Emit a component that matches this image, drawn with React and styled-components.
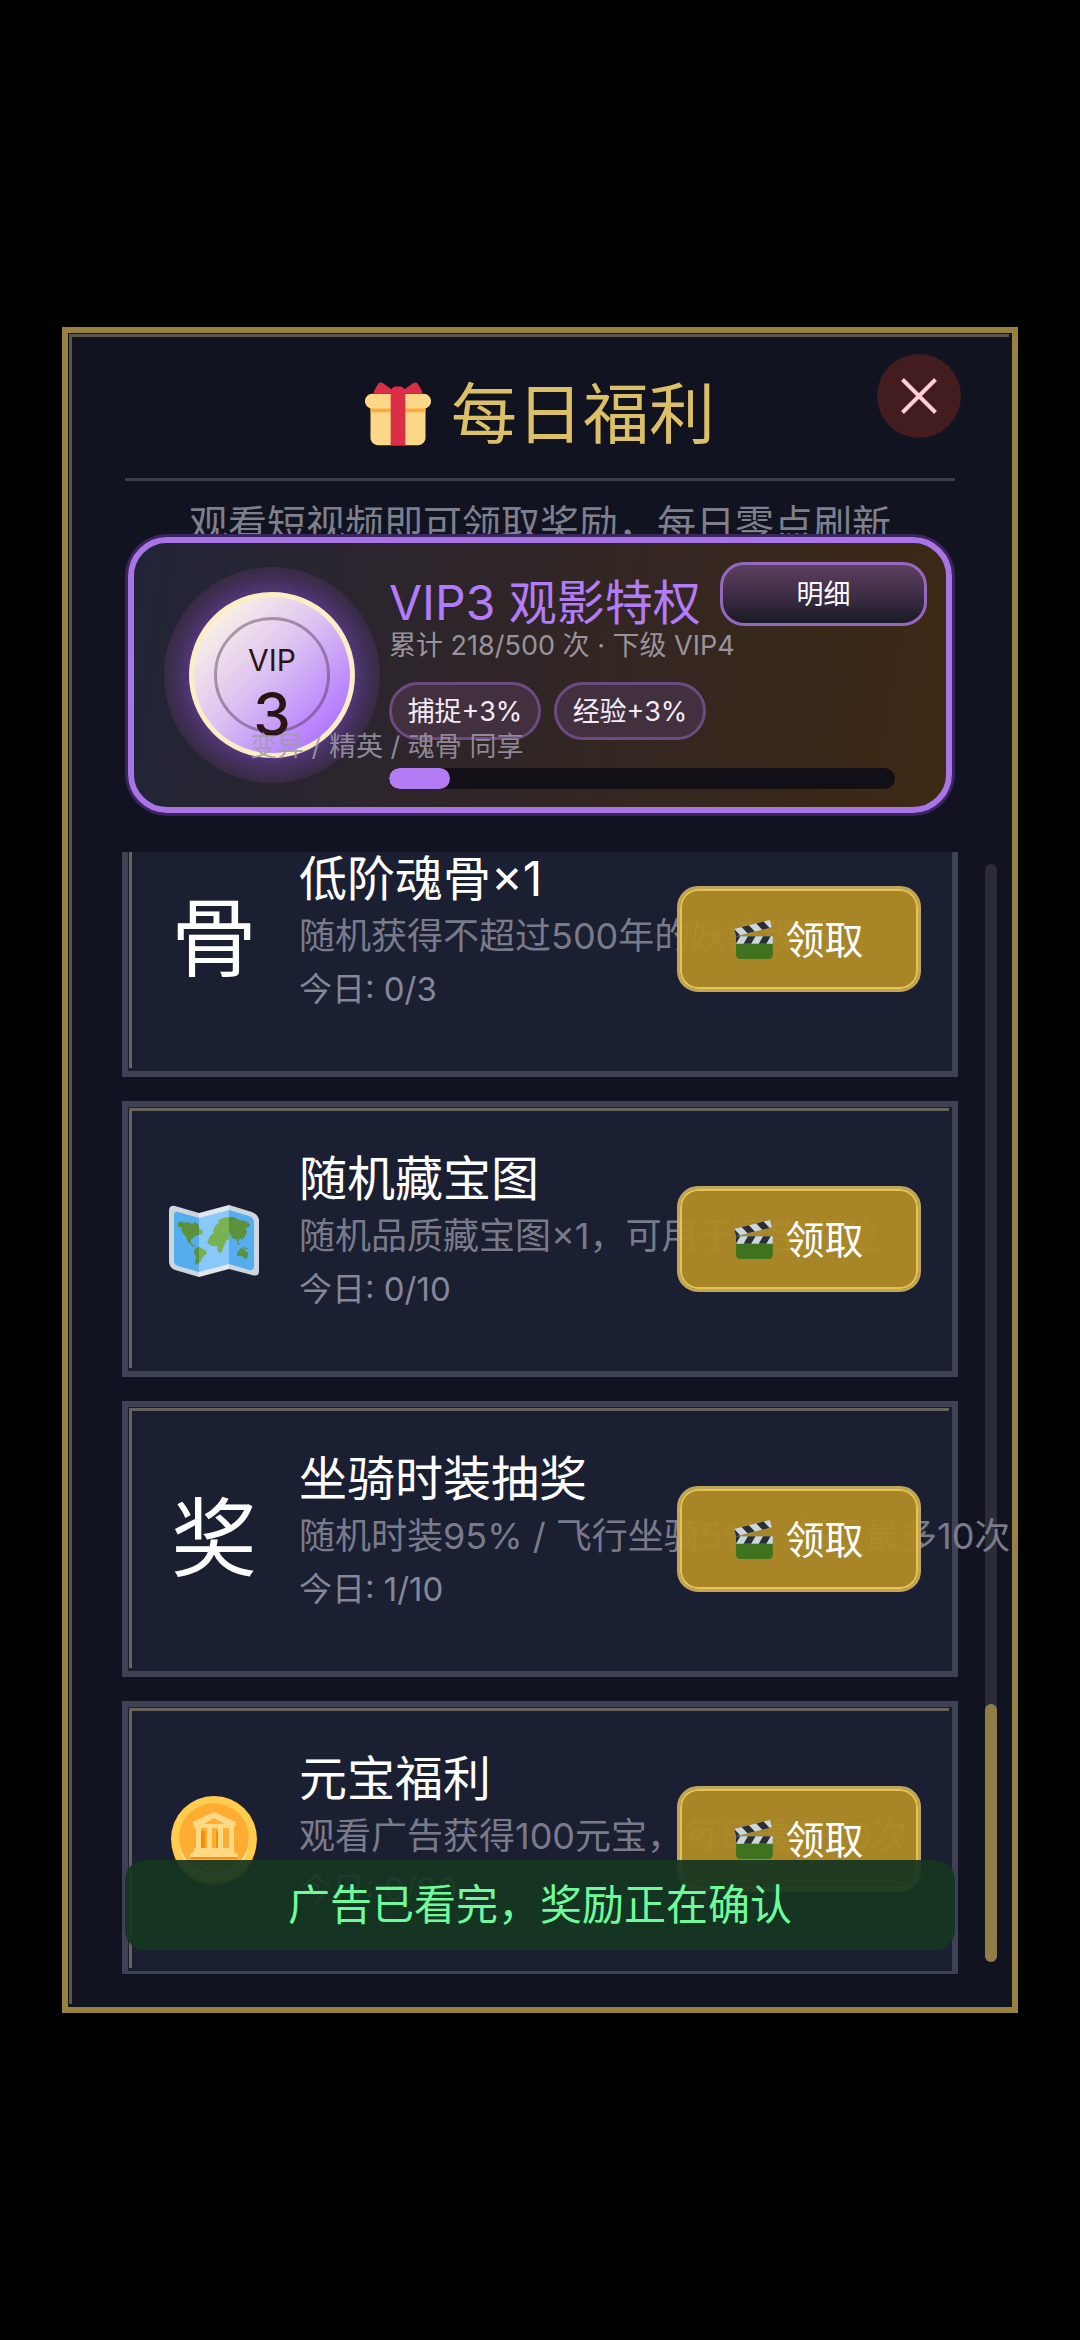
import React from "react";
import styled, { createGlobalStyle } from "styled-components";

const GlobalStyle = createGlobalStyle`
  * {
    box-sizing: border-box;
  }

  body {
    margin: 0;
    background: #000;
    font-family: Inter, "Noto Sans CJK SC", sans-serif;
    color: #fff;
  }

  button {
    font-family: inherit;
    cursor: pointer;
  }

  h1, h2, h3, p, ul {
    margin: 0;
    padding: 0;
    font-weight: 400;
  }
`;

const Screen = styled.main`
  display: flex;
  flex-direction: column;
  height: 100vh;
  padding: 327px 62px;
`;

const Panel = styled.section`
  position: relative;
  flex: 1;
  min-height: 0;
  display: flex;
  flex-direction: column;
  padding: 0 54px 33px;
  border: 6px solid #98803f;
  background: #111320;

  &::before {
    content: "";
    position: absolute;
    inset: 1px 3px 3px 1px;
    border-top: 3px solid #5b554c;
    border-left: 3px solid #5b554c;
    pointer-events: none;
  }
`;

const Header = styled.header`
  display: flex;
  align-items: center;
  justify-content: center;
  gap: 20px;
  height: 148px;
  margin: 0 3px;
  padding-top: 16px;
  border-bottom: 3px solid #3d3d49;
`;

const Title = styled.h1`
  font-size: 66px;
  line-height: 80px;
  color: #dcc068;
`;

const CloseButton = styled.button`
  position: absolute;
  top: 21px;
  right: 51px;
  display: flex;
  align-items: center;
  justify-content: center;
  width: 84px;
  height: 84px;
  padding: 0;
  border: none;
  border-radius: 50%;
  background: #431c20;
`;

const Subtitle = styled.p`
  margin-top: 16px;
  font-size: 39px;
  line-height: 54px;
  text-align: center;
  white-space: nowrap;
  color: #7e808d;
`;

const VipCard = styled.section`
  position: relative;
  display: flex;
  gap: 9px;
  height: 276px;
  margin: -14px 6px 0;
  padding-left: 30px;
  border: 6px solid #a874e6;
  border-radius: 39px;
  background: linear-gradient(100deg, #212438 0%, #2e2529 40%, #3e2914 100%);
  background-clip: padding-box;
  box-shadow: 0 0 0 3px #3c2460;
`;

const BadgeGlow = styled.div`
  align-self: center;
  display: flex;
  align-items: center;
  justify-content: center;
  flex-shrink: 0;
  width: 216px;
  height: 216px;
  border-radius: 50%;
  background: radial-gradient(circle closest-side, #56377f 74%, #42305a 88%, #382b44 100%);
`;

const Badge = styled.div`
  position: relative;
  display: flex;
  flex-direction: column;
  align-items: center;
  width: 166px;
  height: 166px;
  padding-top: 45px;
  border: 5px solid #fbeec4;
  border-radius: 50%;
  background: linear-gradient(135deg, #fbf6e6 10%, #dcc0f2 48%, #b47cff 84%);
  color: #2b1512;

  &::before {
    content: "";
    position: absolute;
    inset: 20px;
    border: 3px solid rgba(60, 30, 50, 0.38);
    border-radius: 50%;
  }
`;

const BadgeLabel = styled.span`
  font-size: 30px;
  line-height: 36px;
`;

const BadgeLevel = styled.span`
  font-size: 60px;
  font-weight: 500;
  line-height: 72px;
`;

const VipInfo = styled.div`
  flex: 1;
  min-width: 0;
  padding: 19px 51px 0 0;
`;

const VipHead = styled.div`
  display: flex;
  justify-content: space-between;
  height: 68px;
  margin-right: -32px;
`;

const VipTitle = styled.h2`
  padding-top: 14px;
  font-size: 48px;
  line-height: 54px;
  white-space: nowrap;
  color: #b27cf8;
`;

const DetailButton = styled.button`
  width: 207px;
  height: 64px;
  padding: 0 0 4px;
  border: 3px solid #9468bd;
  border-radius: 24px;
  background: linear-gradient(#5e3f60, #3c2c44 55%, #191a25);
  font-size: 27px;
  color: #fff;
`;

const VipText = styled.p`
  font-size: 27px;
  line-height: 32px;
  white-space: nowrap;
  color: #98949c;
`;

const VipScope = styled(VipText)`
  position: absolute;
  top: 188px;
  left: 116px;
  color: rgba(160, 155, 172, 0.85);
`;

const Perks = styled.div`
  display: flex;
  gap: 13px;
  margin-top: 20px;
`;

const Perk = styled.span`
  display: flex;
  align-items: center;
  justify-content: center;
  width: 152px;
  height: 58px;
  padding-bottom: 4px;
  border: 3px solid #6b4b80;
  border-radius: 29px;
  background: #43303f;
  font-size: 27px;
  white-space: nowrap;
  color: #f3ecf6;
`;

const Progress = styled.div`
  height: 21px;
  margin-top: 28px;
  border-radius: 11px;
  background: #121016;
  overflow: hidden;
`;

const ProgressFill = styled.div`
  height: 100%;
  border-radius: 11px;
  background: #b27af3;
`;

const Body = styled.div`
  flex: 1;
  min-height: 0;
  display: flex;
  gap: 27px;
  margin: 39px -39px 0 0;
`;

const ListViewport = styled.div`
  position: relative;
  z-index: 1;
  flex: 1;
  min-width: 0;
  overflow-x: visible;
  overflow-y: clip;
`;

const List = styled.ul`
  display: flex;
  flex-direction: column;
  gap: 24px;
  margin-top: -51px;
  list-style: none;
`;

const RewardCard = styled.li`
  position: relative;
  display: flex;
  align-items: center;
  height: 276px;
  padding: 0 31px 0 43px;
  border: 6px solid #3f4255;
  background: #1b1f32;

  &::before {
    content: "";
    position: absolute;
    inset: 1px 3px 3px 1px;
    border-top: 3px solid #67635a;
    border-left: 3px solid #67635a;
    pointer-events: none;
  }
`;

const RewardIcon = styled.div`
  display: flex;
  align-items: center;
  justify-content: center;
  flex-shrink: 0;
  width: 86px;
  height: 108px;
  margin-right: 42px;
  font-size: 86px;
  line-height: 108px;

  svg {
    flex-shrink: 0;
    margin-top: 4px;
  }
`;

const RewardText = styled.div`
  flex: 1;
  min-width: 0;
  height: 180px;
  white-space: nowrap;
`;

const RewardName = styled.h3`
  font-size: 48px;
  line-height: 60px;
`;

const RewardDesc = styled.p`
  font-size: 36px;
  line-height: 54px;
  color: #797b8a;
`;

const RewardCount = styled.p`
  font-size: 33px;
  line-height: 52px;
  color: #868799;
`;

const ClaimButton = styled.button`
  position: relative;
  display: flex;
  align-items: center;
  justify-content: center;
  gap: 12px;
  flex-shrink: 0;
  width: 244px;
  height: 106px;
  padding: 0 0 4px;
  border: 3px solid #c0a65a;
  border-radius: 21px;
  background: rgba(174, 138, 38, 0.96);
  background-clip: padding-box;
  box-shadow: inset 0 0 0 2px #e8c44e;
  font-size: 39px;
  color: #fff;

  svg {
    margin-top: 4px;
  }
`;

const ScrollTrack = styled.div`
  display: flex;
  flex-direction: column;
  justify-content: flex-end;
  width: 12px;
  margin: 12px 0;
  border-radius: 6px;
  background: #2b2c38;
`;

const ScrollThumb = styled.div`
  border-radius: 6px;
  background: #8f7c46;
`;

const Toast = styled.div`
  position: absolute;
  z-index: 2;
  right: 57px;
  bottom: 57px;
  left: 57px;
  padding: 15px 0;
  border-radius: 20px;
  background: rgba(20, 54, 33, 0.93);
  font-size: 42px;
  line-height: 60px;
  text-align: center;
  color: #6ffb9c;
`;

const GiftIcon = () => (
  <svg width="66" height="66" viewBox="0 0 36 36">
    <path fill="#FDD888" d="M33 31c0 2.2-1.8 4-4 4H7c-2.2 0-4-1.8-4-4V14c0-2.2 1.8-4 4-4h22c2.2 0 4 1.8 4 4v17z" />
    <path fill="#FDD888" d="M36 11c0 2.2-1.8 4-4 4H4c-2.2 0-4-1.8-4-4s1.8-4 4-4h28c2.2 0 4 1.8 4 4z" />
    <path fill="#FCAB40" d="M3 15h30v2H3z" />
    <path fill="#DA2F47" d="M19 3h-2c-1.657 0-3 1.343-3 3v29h8V6c0-1.657-1.343-3-3-3z" />
    <path fill="#DA2F47" d="M16 7c1.1 0 1.263-.516.361-1.147L9.639 1.147c-.902-.631-2.085-.366-2.631.589L4.992 5.264C4.446 6.219 4.9 7 6 7h10zm4 0c-1.1 0-1.263-.516-.361-1.147l6.723-4.706c.901-.631 2.085-.366 2.631.589l2.016 3.527C31.554 6.219 31.1 7 30 7H20z" />
  </svg>
);

const CloseIcon = () => (
  <svg width="36" height="36" viewBox="0 0 36 36" stroke="#ffcdd2" strokeWidth="4">
    <path d="M1.500 1.500 34.500 34.500M34.500 1.500 1.500 34.500" />
  </svg>
);

const ClapperIcon = () => (
  <svg width="39" height="39" viewBox="0 0 36 36">
    <path fill="#3E721D" d="M35.845 32c0 2.200-1.800 4-4 4h-26c-2.200 0-4-1.800-4-4V19c0-2.200 1.800-4 4-4h26c2.200 0 4 1.800 4 4v13z" />
    <path fill="#CCD6DD" d="M1.845 15h34v7h-34z" />
    <path fill="#292F33" d="M1.845 15h4l-4 7v-7zm11 0l-4 7h7l4-7h-7zm14 0l-4 7h7l4-7h-7z" />
    <path fill="#CCD6DD" d="M.155 8.207L33.148 0l1.690 6.792L1.845 15z" />
    <path fill="#292F33" d="M.155 8.207l5.572 5.827L1.845 15 .155 8.207zm19.158 2.448l-5.572-5.828-6.793 1.690 5.572 5.828 6.793-1.690zm13.586-3.380l-5.572-5.828-6.793 1.690 5.572 5.827 6.793-1.689z" />
  </svg>
);

const MapIcon = () => (
  <svg width="90" height="74" viewBox="0 0 90 74">
    <path fill="#ccd6dd" d="M0 7Q0 1 6 2L30 9V73L6 66Q0 63 0 58z" />
    <path fill="#e1e8ed" d="M30 9 60 1V65L30 73z" />
    <path fill="#ccd6dd" d="M60 1 83 8Q90 11 90 17V67Q90 73 83 71L60 65z" />
    <path fill="#55acee" d="M5 11Q5 7 9 8L30 14V68L9 62Q5 61 5 57z" />
    <path fill="#88c9f9" d="M30 14 60 6V60L30 68z" />
    <path fill="#55acee" d="M60 6 80 12Q85 14 85 18V62Q85 67 80 66L60 60z" />
    <path fill="#5c913b" d="M9 19 12 17 16 19 19 18 23 20 26 18 30 21V31L26 32 22 36 22 39 26 42 25 43 19 38 17 33 13 28 12 23 9 23z" />
    <path fill="#77b255" d="M30 24 34 27 33 30 30 31zM30 43 36 46 38 49 34 53 32 57 30 59z" />
    <path fill="#5c913b" d="M30 43V59L28 61 26 59 27 52 25 49 26 44z" />
    <path fill="#77b255" d="M38 39 41 32 45 29 44 27 46 22 51 18 48 17 54 14 60 13V35L57 37 55 42 52 49 49 48 48 42 43 42z" />
    <path fill="#5c913b" d="M60 13 65 13 70 16 76 17 81 20 80 23 77 24 78 29 76 32 73 36 71 34 69 38 67 35 64 35 60 27zM68 49 72 44 75 45 79 49 79 53 76 55 73 52 68 52zM68 37 71 40 69 41zM73 42 80 45 76 45z" />
  </svg>
);

const CoinIcon = () => (
  <svg width="86" height="90" viewBox="0 0 86 90">
    <circle cx="43" cy="47" r="42" fill="#f4900c" />
    <circle cx="43" cy="43" r="43" fill="#ffcc4d" />
    <circle cx="43" cy="45" r="35" fill="#ffe8b6" />
    <circle cx="43" cy="42" r="35" fill="#ffac33" />
    <path fill="#f4900c" d="M20 58H66V63H20zM30 35h4v17h-4zm15 0h4v17h-4zm14 0h4v17h-4z" />
    <path fill="#ffd983" fillRule="evenodd" d="M22 26 43 16 65 26V29L62 32H24L22 29zM33 28H54L43 22z" />
    <path fill="#ffd983" d="M25 32h5v20h-5zm11 0h5v20h-5zm11 0h5v20h-5zm11 0h5v20h-5zM23 52H63V56L67 58V61H19V58L23 56z" />
  </svg>
);

const rewards = [
  { icon: "骨", name: "低阶魂骨×1", desc: "随机获得不超过500年的妖兽魂骨", count: "0/3" },
  { icon: <MapIcon />, name: "随机藏宝图", desc: "随机品质藏宝图×1，可用于寻宝探险", count: "0/10" },
  { icon: "奖", name: "坐骑时装抽奖", desc: "随机时装95% / 飞行坐骑5%，每日最多10次", count: "1/10" },
  { icon: <CoinIcon />, name: "元宝福利", desc: "观看广告获得100元宝，每日最多20次", count: "0/20" },
];

const Reward = ({ icon, name, desc, count }) => (
  <RewardCard>
    <RewardIcon>{icon}</RewardIcon>
    <RewardText>
      <RewardName>{name}</RewardName>
      <RewardDesc>{desc}</RewardDesc>
      <RewardCount>今日: {count}</RewardCount>
    </RewardText>
    <ClaimButton type="button">
      <ClapperIcon />
      领取
    </ClaimButton>
  </RewardCard>
);

const App = () => {
  return (
    <>
      <GlobalStyle />
      <Screen>
        <Panel>
          <Header>
            <GiftIcon />
            <Title>每日福利</Title>
            <CloseButton type="button" aria-label="关闭">
              <CloseIcon />
            </CloseButton>
          </Header>
          <Subtitle>观看短视频即可领取奖励，每日零点刷新</Subtitle>
          <VipCard>
            <BadgeGlow>
              <Badge>
                <BadgeLabel>VIP</BadgeLabel>
                <BadgeLevel>3</BadgeLevel>
              </Badge>
            </BadgeGlow>
            <VipInfo>
              <VipHead>
                <VipTitle>VIP3 观影特权</VipTitle>
                <DetailButton type="button">明细</DetailButton>
              </VipHead>
              <VipText>累计 218/500 次 · 下级 VIP4</VipText>
              <Perks>
                <Perk>捕捉+3%</Perk>
                <Perk>经验+3%</Perk>
              </Perks>
              <Progress>
                <ProgressFill style={{ width: "12%" }} />
              </Progress>
            </VipInfo>
            <VipScope>变异 / 精英 / 魂骨 同享</VipScope>
          </VipCard>
          <Body>
            <ListViewport>
              <List>
                {rewards.map((reward) => (
                  <Reward key={reward.name} {...reward} />
                ))}
              </List>
            </ListViewport>
            <ScrollTrack>
              <ScrollThumb style={{ height: "23.5%" }} />
            </ScrollTrack>
          </Body>
          <Toast role="status">广告已看完，奖励正在确认</Toast>
        </Panel>
      </Screen>
    </>
  );
};

export default App;
